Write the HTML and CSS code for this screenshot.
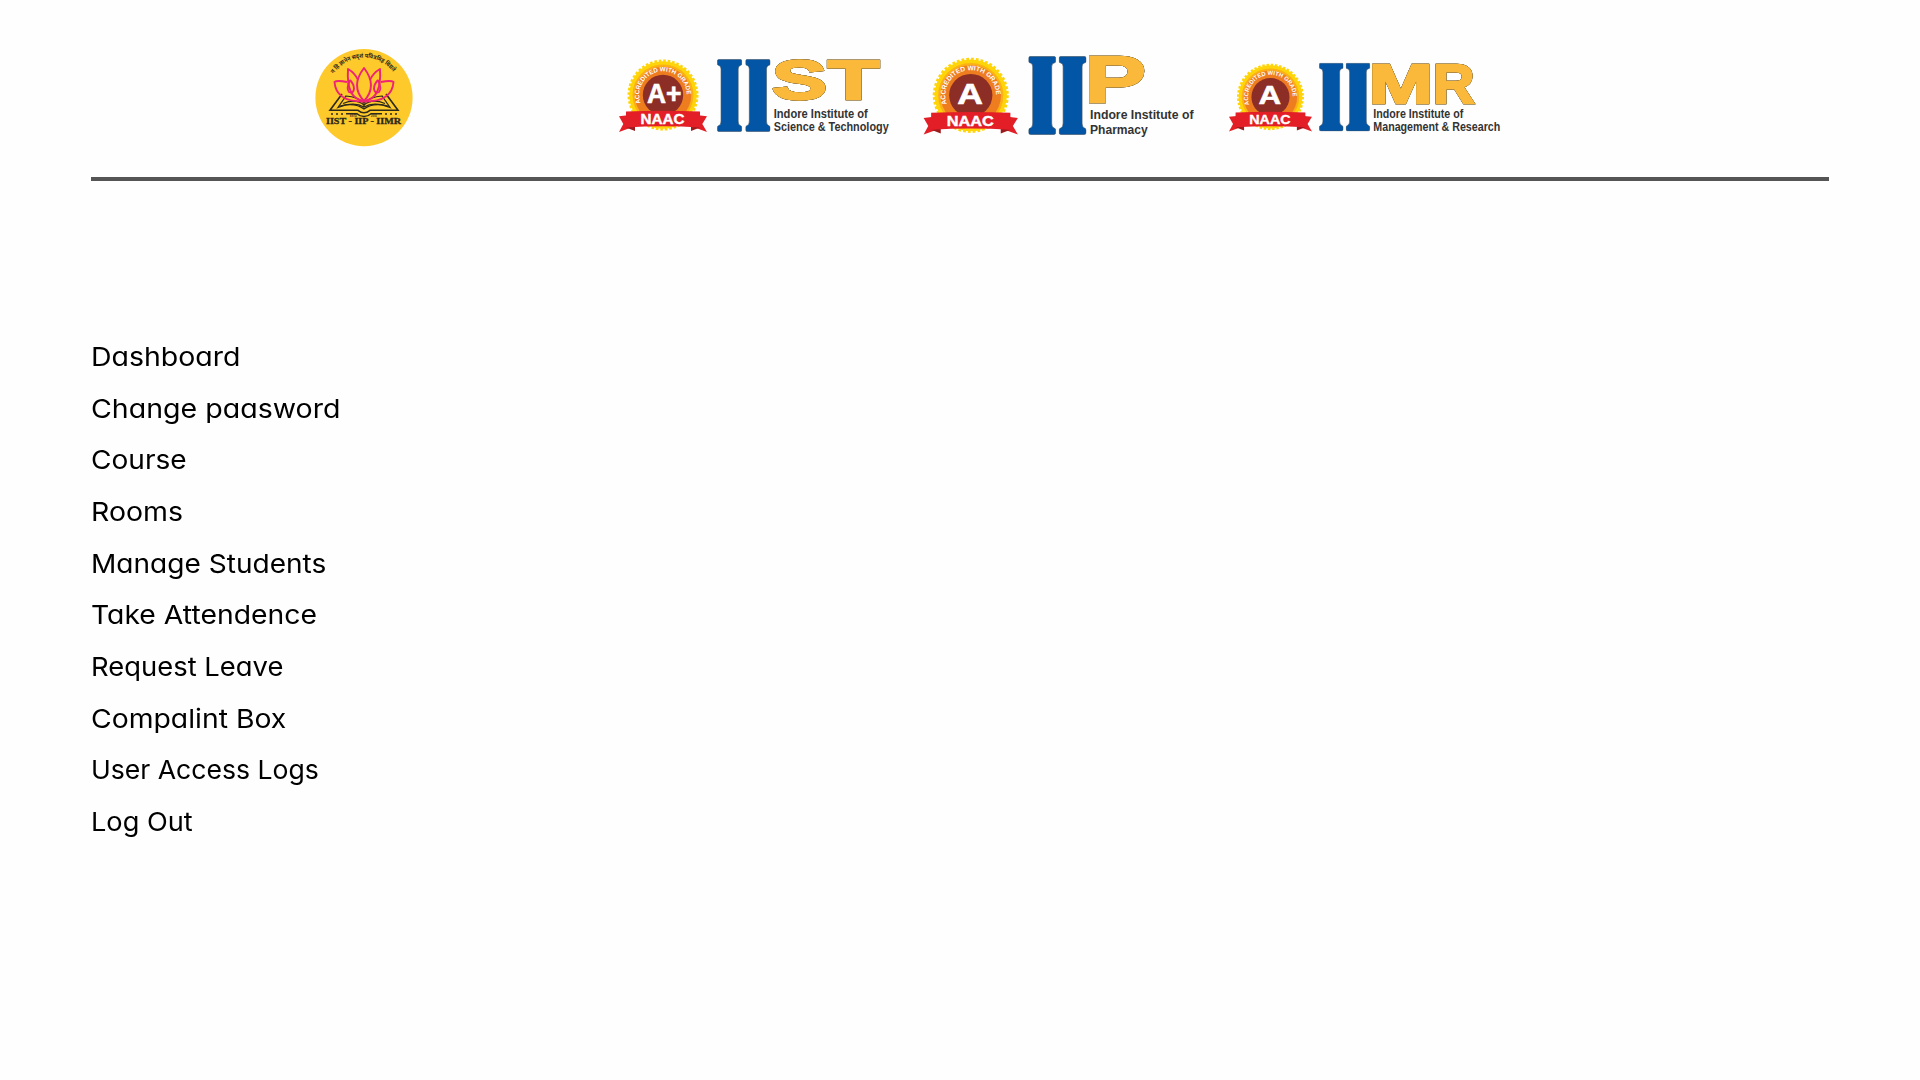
FILE: index.html
```html
<!DOCTYPE html>
<html lang="en">
<head>
<meta charset="utf-8">
<title>Dashboard</title>
<link rel="stylesheet" href="styles.css">
</head>
<body>
<svg class="defs" width="0" height="0" aria-hidden="true">
  <defs>
    <symbol id="pillar" viewBox="0 0 25 73" preserveAspectRatio="none">
      <path d="M1.5 .5H23.5Q24.6 .5 24.6 2V5Q24.6 6.3 23 6.5Q21 7 21 10V62Q21 66 23.2 66.6Q24.6 67 24.6 68.5V71Q24.6 72.5 23 72.5H2Q.4 72.5 .4 71V68.5Q.4 67 1.8 66.6Q4 66 4 62V10Q4 7 2 6.5Q.4 6.3 .4 5V2Q.4 .5 1.5 .5Z" fill="#0356a5" stroke="#3c5268" stroke-width=".6"/>
    </symbol>
    <path id="grade-arc" d="M30.6 58.2A23.8 23.8 0 1 1 75.4 58.2"/>
    <g id="seal">
      <circle cx="53" cy="50" r="33.8" fill="#ffd50a"/>
      <circle cx="53" cy="50" r="34" fill="none" stroke="#ffd50a" stroke-width="3" stroke-dasharray="2.6 1.85"/>
      <circle cx="53" cy="50" r="30.5" fill="#fbb116"/>
      <circle cx="53" cy="50" r="28.3" fill="#ee7d20"/>
      <circle cx="53" cy="50" r="20.2" fill="#8c2d26"/>
      <text class="grade"><textPath href="#grade-arc">ACCREDITED WITH GRADE</textPath></text>
      <path d="M9 71.3L20 70V83L9 87L13.3 79ZM97 71.3L86 70V83L97 87L92.3 79Z" fill="#e21f26"/>
      <path d="M16 82.5L25 81V86ZM90 82.5L81 81V86Z" fill="#9c1b1e"/>
      <path d="M16 66.5Q53 65 90 66.5V82.5Q53 80 16 82.5Z" fill="#e31e26"/>
      <text class="naac" x="30.5" y="79" textLength="44" lengthAdjust="spacingAndGlyphs">NAAC</text>
    </g>
  </defs>
</svg>

<header class="header">
  <svg class="emblem" viewBox="0 0 120 116" role="img" aria-label="IIST IIP IIMR">
    <defs><path id="motto-arc" d="M28 34.5A37 37 0 0 1 90 34.5"/></defs>
    <circle cx="59" cy="57.7" r="48.6" fill="#fec92b"/>
    <text class="motto"><textPath href="#motto-arc" startOffset="1" textLength="69" lengthAdjust="spacingAndGlyphs">न हि ज्ञानेन सदृशं पवित्रमिह विद्यते</textPath></text>
    <g fill="none" stroke="#2c291d" stroke-width="1.6">
      <path d="M37 54L25 70.3H53Q56 72.8 59 72.8T65 70.3H93L81 54"/>
      <path d="M59 67Q49 61 33 67.5L41 56Q53 57 59 63Q65 57 77 56L85 67.5Q69 61 59 67V62" stroke-width="1.2"/>
      <path d="M38 63.5Q51 58 59 65Q67 58 80 63.5M35 66Q50 62 59 69Q68 62 83 66" stroke-width="1.2"/>
      <path d="M41 73.7H52Q55 76.5 59 76.5T66 73.7H77" stroke-width="1.4"/>
      <path d="M26 74H38M80 74H92" stroke-dasharray="2 3"/>
    </g>
    <g fill="none" stroke="#ee2375" stroke-width="1.9" stroke-linejoin="round">
      <path d="M59 28Q45 46 59 61Q73 46 59 28Z"/>
      <path d="M59 61Q41 59 43 29Q50 33 53 40M59 61Q77 59 75 29Q68 33 65 40"/>
      <path d="M42 42Q32 40 29.5 42Q31 62 59 61.5Q87 62 88.5 42Q86 40 76 42"/>
      <path d="M45 40Q41 49 44 52Q48 54 49 49Q49 44 45 40M73 40Q77 49 74 52Q70 54 69 49Q69 44 73 40"/>
    </g>
    <text class="est" x="45" y="77.4">ESTD</text><text class="est" x="66" y="77.4">2003</text>
    <text class="names" x="21" y="84.4" textLength="75" lengthAdjust="spacingAndGlyphs">IIST - IIP - IIMR</text>
  </svg>

  <div class="institutes">
    <svg class="institute" viewBox="0 0 290 100">
      <use href="#seal"/>
      <text class="mark" x="37" y="57.5" textLength="34.5" lengthAdjust="spacingAndGlyphs">A+</text>
      <use href="#pillar" x="107" y="14" width="25.2" height="73"/>
      <use href="#pillar" x="135.3" y="14" width="25.2" height="73"/>
      <text class="initial" x="162" y="54" textLength="55" lengthAdjust="spacingAndGlyphs">S</text>
      <text class="initial" x="217.7" y="54" textLength="51.5" lengthAdjust="spacingAndGlyphs">T</text>
      <text class="name" x="163.7" y="73" textLength="94" lengthAdjust="spacingAndGlyphs">Indore Institute of</text>
      <text class="name" x="163.7" y="86" textLength="115" lengthAdjust="spacingAndGlyphs">Science &amp; Technology</text>
    </svg>
    <svg class="institute" viewBox="0 0 290 100">
      <g transform="translate(-1 -2.7) scale(1.071 1.06)">
        <use href="#seal"/>
        <text class="mark single" x="40.3" y="57.8" textLength="24" lengthAdjust="spacingAndGlyphs">A</text>
      </g>
      <use href="#pillar" x="113.3" y="11" width="27.8" height="79"/>
      <use href="#pillar" x="143.7" y="11" width="27.8" height="79"/>
      <text class="initial large" x="169.7" y="57" textLength="61" lengthAdjust="spacingAndGlyphs">P</text>
      <text class="name medium" x="175" y="74" textLength="103.5" lengthAdjust="spacingAndGlyphs">Indore Institute of</text>
      <text class="name medium" x="175" y="89" textLength="57.7" lengthAdjust="spacingAndGlyphs">Pharmacy</text>
    </svg>
    <svg class="institute" viewBox="0 0 290 100">
      <g transform="translate(.5 5.2) scale(.943 .935)">
        <use href="#seal"/>
        <text class="mark single" x="40.3" y="57.8" textLength="24" lengthAdjust="spacingAndGlyphs">A</text>
      </g>
      <use href="#pillar" x="99" y="17.7" width="24.5" height="68.7"/>
      <use href="#pillar" x="125.7" y="17.7" width="24.5" height="68.7"/>
      <text class="initial" x="148.7" y="57.7" textLength="64" lengthAdjust="spacingAndGlyphs">M</text>
      <text class="initial" x="213" y="57.7" textLength="41.5" lengthAdjust="spacingAndGlyphs">R</text>
      <text class="name" x="153.3" y="73" textLength="90" lengthAdjust="spacingAndGlyphs">Indore Institute of</text>
      <text class="name" x="153.3" y="86" textLength="127" lengthAdjust="spacingAndGlyphs">Management &amp; Research</text>
    </svg>
  </div>
</header>

<nav class="menu">
  <a class="w-95">Dashboard</a>
  <a class="w-98">Change paasword</a>
  <a class="w-80">Course</a>
  <a class="w-95">Rooms</a>
  <a class="w-80">Manage Students</a>
  <a class="w-90">Take Attendence</a>
  <a class="w-54">Request Leave</a>
  <a class="w-90">Compalint Box</a>
  <a class="w-22">User Access Logs</a>
  <a class="w-45">Log Out</a>
</nav>
</body>
</html>
```
FILE: styles.css
```css
* { box-sizing: border-box; }
body { margin: 0; padding: 0 91px; background: #fefefe; color: #000; font-family: Inter, sans-serif; }
.defs { display: block; }
.header { display: flex; height: 181px; padding: 40px 0 0 214px; border-bottom: 4px solid #555; }
.emblem { width: 120px; height: 116px; flex: none; }
.institutes { display: flex; gap: 15px; margin: 5px 0 0 185px; }
.institute { width: 290px; height: 100px; flex: none; overflow: visible; }

text { font-family: "Liberation Sans", Arial, sans-serif; font-weight: 700; }
.motto { font-family: "Noto Sans Devanagari", "Noto Sans", sans-serif; font-size: 6px; fill: #2c291d; }
.est { font-size: 2.6px; fill: #2c291d; }
.names { font-family: "Liberation Serif", serif; font-size: 8.4px; fill: #2c291d; stroke: #2c291d; stroke-width: .3px; }
.grade { font-size: 6.2px; fill: #fff; }
.naac { font-size: 14.2px; fill: #fff; stroke: #fff; stroke-width: .4px; }
.mark { font-size: 27px; fill: #fff; stroke: #fff; stroke-width: .6px; }
.mark.single { font-size: 28.5px; }
.initial { font-size: 55.5px; fill: #fbb93b; stroke: #fbb93b; stroke-width: 2.4px; filter: drop-shadow(0 0 .4px #4a4434) drop-shadow(0 0 .3px #4a4434); }
.initial.large { font-size: 64px; }
.name { font-size: 12.8px; fill: #333; }
.name.medium { font-size: 13.6px; }

.menu { display: flex; flex-direction: column; align-items: flex-start; padding-top: 150px; }
.menu a { font-size: 26px; line-height: 51.65px; font-feature-settings: "cv11"; transform-origin: left; }
.w-98 { transform: scaleX(1.098); }
.w-95 { transform: scaleX(1.095); }
.w-90 { transform: scaleX(1.09); }
.w-80 { transform: scaleX(1.079); }
.w-54 { transform: scaleX(1.054); }
.w-45 { transform: scaleX(1.045); }
.w-22 { transform: scaleX(1.022); }
```
